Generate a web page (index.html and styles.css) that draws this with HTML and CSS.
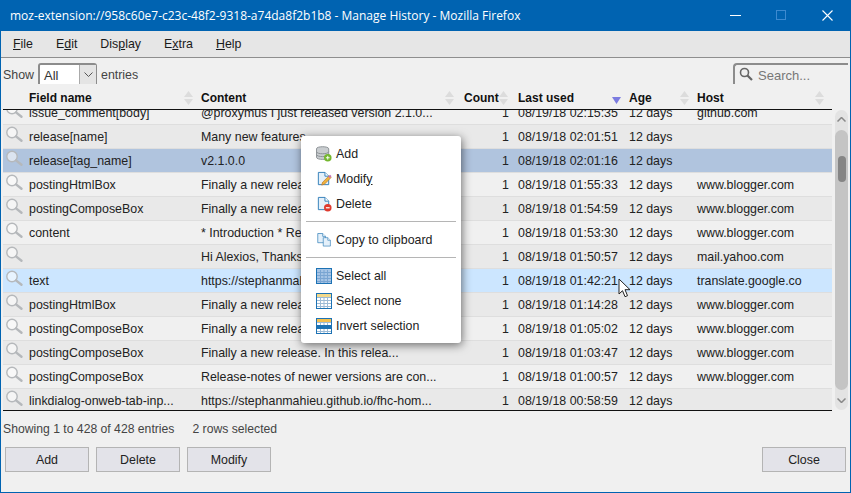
FILE: index.html
```html
<!DOCTYPE html>
<html lang="en">
<head>
    <meta charset="UTF-8">
    <title>Manage History</title>
    <link rel="stylesheet" href="styles.css">
</head>
<body>
    <svg class="defs" width="0" height="0">
        <symbol id="lens" viewBox="0 0 18 18">
            <circle cx="6" cy="6.500" r="5.200" fill="#fff" fill-opacity="0.55" stroke="#b5b8bb" stroke-width="1.400"/>
            <path d="M10 10.400 15.500 14.800" stroke="#b5b8bb" stroke-width="2.400" stroke-linecap="round"/>
        </symbol>
        <symbol id="sort" viewBox="0 0 9 15">
            <path d="M4.500 0 9 6H0zM0 8h9l-4.500 6z" fill="#dcdcdc"/>
        </symbol>
        <symbol id="page" viewBox="0 0 16 16">
            <path d="M2.500 1.500h7l4 4v9h-11z" fill="#e4f0fa" stroke="#2f7db8"/>
            <path d="M9.500 1.500v4h4" fill="#fff" stroke="#2f7db8"/>
        </symbol>
        <symbol id="grid" viewBox="0 0 16 16">
            <rect x="0.500" y="0.500" width="15" height="15" fill="#fff" stroke="#1c72b4"/>
            <path d="M1 4.500h14M1 7.500h14M1 10.500h14M1 13.500h14M4.500 2v13M8 2v13M11.500 2v13" stroke="#9dbbd6"/>
        </symbol>
    </svg>

    <div class="window">
        <header class="titlebar">
            <span class="title">moz-extension://958c60e7-c23c-48f2-9318-a74da8f2b1b8 - Manage History - Mozilla Firefox</span>
            <div class="win-btns">
                <svg class="win-btn" width="11" height="11"><path d="M0 5.500h11" stroke="#fff"/></svg>
                <svg class="win-btn" width="11" height="11"><rect x="0.500" y="0.500" width="9" height="9" fill="none" stroke="#3d8ad0"/></svg>
                <svg class="win-btn" width="11" height="11"><path d="M0.500 0.500l10 10M10.500 0.500l-10 10" stroke="#fff" stroke-width="1.100"/></svg>
            </div>
        </header>

        <nav class="menubar">
            <a><u>F</u>ile</a>
            <a>E<u>d</u>it</a>
            <a>Dis<u>p</u>lay</a>
            <a>E<u>x</u>tra</a>
            <a><u>H</u>elp</a>
        </nav>

        <main class="content">
            <div class="toolbar">
                <div class="show">
                    <span class="show-label">Show</span>
                    <div class="select"><span class="select-val">All</span><span class="select-arrow"><svg width="9" height="5"><path d="M0.500 0.500 4.500 4.500 8.500 0.500" fill="none" stroke="#555"/></svg></span></div>
                    <span class="show-label">entries</span>
                </div>
                <div class="search">
                    <svg width="14" height="14" viewBox="0 0 14 14"><circle cx="5.500" cy="5.500" r="4" fill="none" stroke="#666" stroke-width="1.600"/><path d="M8.500 8.500 13 13" stroke="#666" stroke-width="2.200"/></svg>
                    <span class="search-text">Search...</span>
                </div>
            </div>

            <div class="grid-area">
                <div class="table">
                    <div class="row head">
                        <div></div>
                        <div class="th">Field name<svg class="sort"><use href="#sort"/></svg></div>
                        <div class="th wide-sort">Content<svg class="sort"><use href="#sort"/></svg></div>
                        <div class="th wide-sort">Count<svg class="sort"><use href="#sort"/></svg></div>
                        <div class="th">Last used<svg class="sort" viewBox="0 0 9 15"><path d="M0 6h9l-4.500 7z" fill="#7b7be0"/></svg></div>
                        <div class="th">Age<svg class="sort"><use href="#sort"/></svg></div>
                        <div class="th">Host<svg class="sort"><use href="#sort"/></svg></div>
                    </div>
                    <div class="rows">
                        <div class="rows-inner">
                            <div class="row"><svg class="lens"><use href="#lens"/></svg><div>issue_comment[body]</div><div>@proxymus I just released version 2.1.0...</div><div class="num">1</div><div>08/19/18 02:15:35</div><div>12 days</div><div>github.com</div></div>
                            <div class="row alt"><svg class="lens"><use href="#lens"/></svg><div>release[name]</div><div>Many new features</div><div class="num">1</div><div>08/19/18 02:01:51</div><div>12 days</div><div></div></div>
                            <div class="row selected"><svg class="lens"><use href="#lens"/></svg><div>release[tag_name]</div><div>v2.1.0.0</div><div class="num">1</div><div>08/19/18 02:01:16</div><div>12 days</div><div></div></div>
                            <div class="row"><svg class="lens"><use href="#lens"/></svg><div>postingHtmlBox</div><div>Finally a new release. In this relea...</div><div class="num">1</div><div>08/19/18 01:55:33</div><div>12 days</div><div>www.blogger.com</div></div>
                            <div class="row alt"><svg class="lens"><use href="#lens"/></svg><div>postingComposeBox</div><div>Finally a new release. In this relea...</div><div class="num">1</div><div>08/19/18 01:54:59</div><div>12 days</div><div>www.blogger.com</div></div>
                            <div class="row"><svg class="lens"><use href="#lens"/></svg><div>content</div><div>* Introduction * Release notes</div><div class="num">1</div><div>08/19/18 01:53:30</div><div>12 days</div><div>www.blogger.com</div></div>
                            <div class="row alt"><svg class="lens"><use href="#lens"/></svg><div></div><div>Hi Alexios, Thanks for the update</div><div class="num">1</div><div>08/19/18 01:50:57</div><div>12 days</div><div>mail.yahoo.com</div></div>
                            <div class="row hover"><svg class="lens"><use href="#lens"/></svg><div>text</div><div>https://stephanmahieu.github.io/fhc</div><div class="num">1</div><div>08/19/18 01:42:21</div><div>12 days</div><div>translate.google.co</div></div>
                            <div class="row alt"><svg class="lens"><use href="#lens"/></svg><div>postingHtmlBox</div><div>Finally a new release. In this relea...</div><div class="num">1</div><div>08/19/18 01:14:28</div><div>12 days</div><div>www.blogger.com</div></div>
                            <div class="row"><svg class="lens"><use href="#lens"/></svg><div>postingComposeBox</div><div>Finally a new release. In this relea...</div><div class="num">1</div><div>08/19/18 01:05:02</div><div>12 days</div><div>www.blogger.com</div></div>
                            <div class="row alt"><svg class="lens"><use href="#lens"/></svg><div>postingComposeBox</div><div>Finally a new release. In this relea...</div><div class="num">1</div><div>08/19/18 01:03:47</div><div>12 days</div><div>www.blogger.com</div></div>
                            <div class="row"><svg class="lens"><use href="#lens"/></svg><div>postingComposeBox</div><div>Release-notes of newer versions are con...</div><div class="num">1</div><div>08/19/18 01:00:57</div><div>12 days</div><div>www.blogger.com</div></div>
                            <div class="row alt"><svg class="lens"><use href="#lens"/></svg><div>linkdialog-onweb-tab-inp...</div><div>https://stephanmahieu.github.io/fhc-hom...</div><div class="num">1</div><div>08/19/18 00:58:59</div><div>12 days</div><div></div></div>
                        </div>
                    </div>
                </div>
                <div class="scrollbar">
                    <svg width="9" height="5"><path d="M0.500 4.500 4.500 0.500 8.500 4.500" fill="none" stroke="#888" stroke-width="1.500"/></svg>
                    <div class="track"><div class="thumb"></div></div>
                    <svg width="9" height="5"><path d="M0.500 0.500 4.500 4.500 8.500 0.500" fill="none" stroke="#888" stroke-width="1.500"/></svg>
                </div>
            </div>

            <div class="status">
                <span>Showing 1 to 428 of 428 entries</span>
                <span>2 rows selected</span>
            </div>

            <div class="actions">
                <button>Add</button>
                <button>Delete</button>
                <button>Modify</button>
                <button class="close">Close</button>
            </div>
        </main>

        <div class="menu">
            <div class="menu-item">
                <svg viewBox="0 0 17 17"><path d="M0.500 3c0-3 13-3 13 0v9c0 3-13 3-13 0z" fill="#c9cdd0" stroke="#8a8f93"/><path d="M0.500 6c0 3 13 3 13 0M0.500 9c0 3 13 3 13 0" fill="none" stroke="#8a8f93"/><circle cx="12.500" cy="12.500" r="4" fill="#74b72e"/><path d="M10.500 12.500h4M12.500 10.500v4" stroke="#fff"/></svg>
                <span>Add</span>
            </div>
            <div class="menu-item">
                <svg viewBox="0 0 17 17"><use href="#page" width="16" height="16"/><path d="M6 15l1-3 7-7 2 2-7 7z" fill="#f0b43c" stroke="#b5702a" stroke-width="0.700"/><path d="M13 6l2-2 1.500 1.500-2 2z" fill="#c86fb5"/></svg>
                <span>Modif<u>y</u></span>
            </div>
            <div class="menu-item">
                <svg viewBox="0 0 17 17"><use href="#page" width="16" height="16"/><circle cx="12.500" cy="12.500" r="4" fill="#df3a2e"/><path d="M10.500 12.500h4" stroke="#fff" stroke-width="1.300"/></svg>
                <span>Delete</span>
            </div>
            <div class="menu-sep"></div>
            <div class="menu-item">
                <svg viewBox="0 0 17 17"><use href="#page" width="12" height="13"/><use href="#page" x="6" y="4" width="11" height="13"/></svg>
                <span>Copy to clipboard</span>
            </div>
            <div class="menu-sep"></div>
            <div class="menu-item">
                <svg viewBox="0 0 16 16"><use href="#grid" width="16" height="16"/><rect x="1" y="1" width="14" height="14" fill="#5c94cf" fill-opacity="0.55"/></svg>
                <span>Select all</span>
            </div>
            <div class="menu-item">
                <svg viewBox="0 0 16 16"><use href="#grid" width="16" height="16"/><rect x="1" y="1" width="14" height="3" fill="#f3d98b"/></svg>
                <span>Select none</span>
            </div>
            <div class="menu-item">
                <svg viewBox="0 0 16 16"><use href="#grid" width="16" height="16"/><rect x="1" y="1" width="14" height="3" fill="#f3c04f"/><rect x="1" y="7" width="14" height="4" fill="#1c72b4"/></svg>
                <span>Invert selection</span>
            </div>
        </div>

        <svg class="cursor" width="14" height="21" viewBox="0 0 14 21"><path d="M1 1v15l3.500-3.300 2.500 6 2.500-1-2.500-6h5z" fill="#fff" stroke="#222"/></svg>
    </div>
</body>
</html>
```

FILE: styles.css
```css
* {
    box-sizing: border-box;
}
html, body {
    margin: 0;
    height: 100%;
}
body {
    font-family: "Liberation Sans", Arial, sans-serif;
    font-size: 12.400px;
    color: #1a1a1a;
    overflow: hidden;
}
.defs {
    position: absolute;
}
.window {
    position: relative;
    width: 851px;
    height: 493px;
    display: flex;
    flex-direction: column;
    background-color: #f0f0f0;
    border: 1px solid #0063b1;
    border-top: 0;
}
.titlebar {
    height: 31px;
    margin: 0 -1px;
    padding-left: 10px;
    display: flex;
    align-items: center;
    justify-content: space-between;
    background-color: #0063b1;
    color: #fff;
    font-family: "Open Sans", "Liberation Sans", sans-serif;
    font-size: 12px;
}
.win-btns {
    display: flex;
    align-items: center;
    gap: 35px;
    padding-right: 18px;
}
.win-btn {
    display: block;
}
.menubar {
    height: 27px;
    padding-left: 12px;
    display: flex;
    align-items: center;
    gap: 23px;
    background-color: #e6e6e6;
    border-bottom: 1px solid #8e8e8e;
}
.content {
    flex: 1;
    display: flex;
    flex-direction: column;
    padding: 0 2px;
}
.toolbar {
    height: 30px;
    display: flex;
    align-items: center;
    justify-content: space-between;
    color: #444;
}
.show {
    display: flex;
    align-items: center;
    gap: 4px;
}
.show-label {
    padding-top: 3px;
}
.select {
    width: 59px;
    height: 21px;
    display: flex;
    background-color: #fff;
    border: 2px solid #8c8c8c;
    border-right-width: 1px;
    border-bottom: 0;
    border-radius: 3px 3px 0 0;
}
.select-val {
    flex: 1;
    padding: 3px 4px 0;
    color: #333;
    font-size: 13px;
}
.select-arrow {
    width: 17px;
    display: flex;
    align-items: center;
    justify-content: center;
    background-color: #e4e4e4;
    border-left: 1px solid #aaa;
}
.search {
    width: 115px;
    height: 21px;
    padding-left: 4px;
    display: flex;
    align-items: center;
    gap: 5px;
    border: 2px solid #8c8c8c;
    border-right: 0;
    border-bottom: 0;
    border-radius: 4px 0 0 0;
    color: #777;
    font-size: 13px;
}
.search-text {
    padding-top: 2px;
}
.grid-area {
    display: flex;
    justify-content: space-between;
    align-items: flex-start;
}
.table {
    width: 829px;
    border-bottom: 1px solid #111;
}
.row {
    height: 24px;
    display: grid;
    grid-template-columns: 26px 172px 263px 54px 111px 68px 135px;
    align-items: center;
    background-color: #f0f0f0;
    border-bottom: 1px solid #dedede;
    color: #222;
    white-space: nowrap;
}
.row.alt {
    background-color: #e9e9e9;
}
.row.selected {
    background-color: #b0c4de;
}
.row.hover {
    background-color: #cce6ff;
}
.row.head {
    height: 22px;
    background-color: #f0f0f0;
    border-bottom: 1px solid #111;
    font-size: 12px;
    font-weight: bold;
    color: #111;
}
.th {
    position: relative;
    height: 100%;
    line-height: 21px;
}
.sort {
    position: absolute;
    top: 3px;
    right: 8px;
    width: 9px;
    height: 15px;
}
.wide-sort .sort {
    right: 10px;
}
.rows {
    height: 300px;
    overflow: hidden;
}
.rows-inner {
    margin-top: -9px;
}
.lens {
    width: 18px;
    height: 18px;
    margin: -3px 0 0 3px;
}
.num {
    text-align: right;
    padding-right: 9px;
}
.scrollbar {
    width: 13px;
    height: 300px;
    margin-top: 22px;
    padding: 7px 0;
    display: flex;
    flex-direction: column;
    align-items: center;
    justify-content: space-between;
    background-color: #e3e3e3;
    border-radius: 7px;
}
.track {
    width: 13px;
    height: 260px;
    padding-top: 26px;
    display: flex;
    justify-content: center;
    background-color: #c4c4c4;
    border-radius: 7px;
}
.thumb {
    width: 8px;
    height: 26px;
    background-color: #858585;
    border-radius: 4px;
}
.status {
    height: 35px;
    margin-bottom: 1px;
    display: flex;
    align-items: center;
    gap: 18px;
    color: #444;
    font-size: 12.200px;
}
.actions {
    display: flex;
    gap: 7px;
    padding: 0 2px;
}
.actions button {
    width: 84px;
    height: 25px;
    padding: 0;
    background-color: #e3e3e9;
    border: 1px solid #b4b4b4;
    color: #222;
    font: inherit;
}
.actions .close {
    margin-left: auto;
}
.menu {
    position: absolute;
    left: 300px;
    top: 136px;
    width: 160px;
    height: 207px;
    padding: 5px;
    background-color: #fff;
    border-radius: 3px;
    box-shadow: 1px 2px 10px rgba(0, 0, 0, 0.55);
    color: #222;
}
.menu-item {
    height: 25px;
    padding-left: 10px;
    display: flex;
    align-items: center;
    gap: 4px;
}
.menu-item svg {
    flex: none;
    width: 16px;
    height: 16px;
}
.menu-sep {
    height: 1px;
    margin: 5px 0;
    background-color: #b5b5b5;
}
.cursor {
    position: absolute;
    left: 617px;
    top: 278px;
}
```
